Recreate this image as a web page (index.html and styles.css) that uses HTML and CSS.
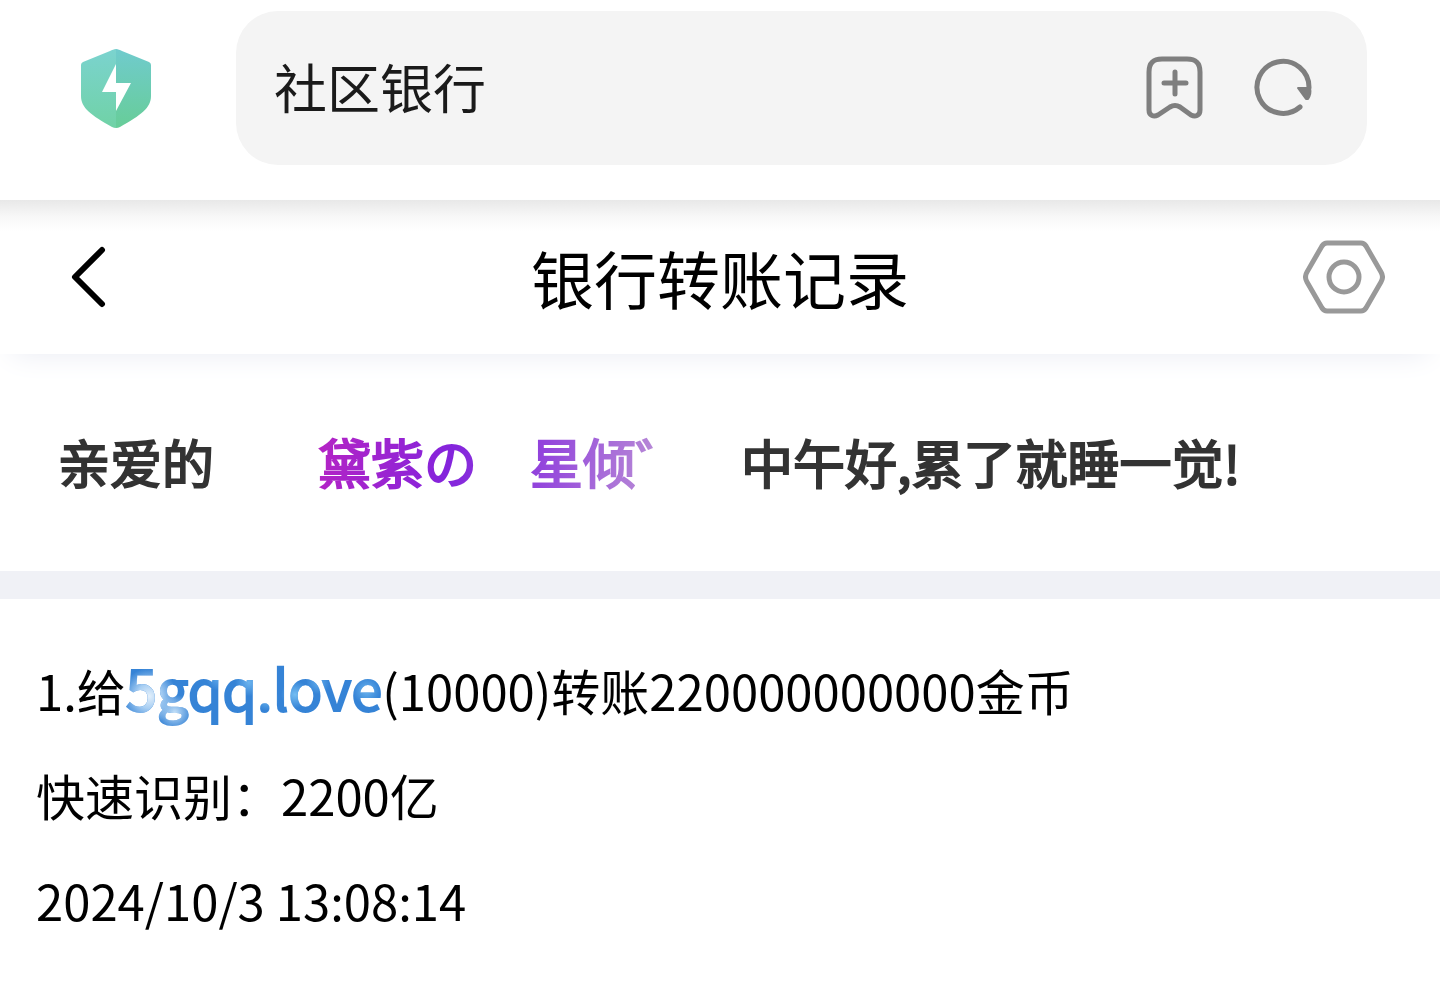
FILE: index.html
```html
<!DOCTYPE html>
<html lang="zh-CN">
<head>
  <meta charset="UTF-8" />
  <meta name="viewport" content="width=device-width, initial-scale=1.0"/>
  <title>社区银行</title>
  <link rel="stylesheet" href="styles.css">
</head>
<body>
  <header class="browser-bar">
    <svg class="shield" viewBox="0 0 72 80" aria-hidden="true">
      <defs>
        <linearGradient id="shieldLeft" x1="0" y1="0" x2="0" y2="1">
          <stop offset="0" stop-color="#7bd3cf"/>
          <stop offset="1" stop-color="#70d2a6"/>
        </linearGradient>
        <linearGradient id="shieldRight" x1="0" y1="0" x2="0" y2="1">
          <stop offset="0" stop-color="#70cbcd"/>
          <stop offset="1" stop-color="#67cd98"/>
        </linearGradient>
      </defs>
      <path fill="url(#shieldLeft)" d="M36 1C34 1 32 2 30 3L3 14Q1 15 1 17V48C1 60 11 67 32 79Q34 80 36 80Z"/>
      <path fill="url(#shieldRight)" d="M36 1C38 1 40 2 42 3L69 14Q71 15 71 17V48C71 60 61 67 40 79Q38 80 36 80Z"/>
      <path fill="#fff" d="M36 16V35H51L36 63V44H22Z"/>
    </svg>
    <form class="address">
      <input type="text" class="address-input" aria-label="地址" value="社区银行">
      <button type="button" class="icon-btn" aria-label="添加书签">
        <svg width="60" height="66" viewBox="0 0 60 66" fill="none" stroke="#7f7f7f" stroke-width="5" stroke-linecap="round" stroke-linejoin="round">
          <path d="M18 4H43C52 4 56 8 56 17V55C56 61 51 62 47 60L36 52Q31 49 26 52L14 60C10 62 5 61 5 55V17C5 8 9 4 18 4Z"/>
          <path d="M31 17V39M20 28H42"/>
        </svg>
      </button>
      <button type="button" class="icon-btn" aria-label="刷新">
        <svg width="60" height="60" viewBox="0 0 60 60" fill="none" stroke="#7f7f7f" stroke-width="5" stroke-linecap="round">
          <path d="M47 49A26 26 0 1 1 56 30"/>
          <path fill="#7f7f7f" stroke-width="2" stroke-linejoin="round" d="M45 30H57C58 34 57 38 55 41H53Z"/>
        </svg>
      </button>
    </form>
  </header>

  <nav class="title-bar">
    <a href="#" class="back" aria-label="返回">
      <svg width="36" height="62" viewBox="0 0 36 62" fill="none" stroke="#000" stroke-width="6" stroke-linecap="round" stroke-linejoin="round">
        <path d="M32 4L5 31L32 58"/>
      </svg>
    </a>
    <h1>银行转账记录</h1>
    <button type="button" class="settings" aria-label="设置">
      <svg width="82" height="74" viewBox="0 0 82 74" fill="none" stroke="#999" stroke-width="5" stroke-linejoin="round">
        <path d="M24 3H58Q61 3 63 6L78 32Q81 37 78 42L63 68Q61 71 58 71H24Q21 71 19 68L4 42Q1 37 4 32L19 6Q21 3 24 3Z"/>
        <circle cx="41" cy="37" r="15"/>
      </svg>
    </button>
  </nav>

  <main>
    <h2 class="greeting">亲爱的　　<span class="nickname">黛紫の　星倾゛</span>　中午好,累了就睡一觉!</h2>
    <section class="record">
      <p>1.给<a href="#" class="payee">5gqq.love</a>(10000)转账220000000000金币</p>
      <p>快速识别：2200亿</p>
      <p>2024/10/3 13:08:14</p>
    </section>
  </main>
</body>
</html>
```
FILE: styles.css
```css
* {
  box-sizing: border-box;
}

body {
  margin: 0;
  font-family: "Noto Sans CJK SC", sans-serif;
  background: #fff;
  color: #000;
}

button {
  border: none;
  padding: 0;
  background: none;
  cursor: pointer;
}

svg {
  display: block;
}

.browser-bar {
  display: flex;
  align-items: center;
  height: 200px;
  padding: 11px 73px 35px 80px;
}

.shield {
  width: 72px;
  height: 80px;
  flex: none;
}

.address {
  display: flex;
  align-items: center;
  flex: 1;
  gap: 49px;
  height: 154px;
  margin-left: 84px;
  padding: 0 54px 0 38px;
  border-radius: 42px;
  background: #f4f4f4;
}

.address-input {
  flex: 1;
  min-width: 0;
  padding: 0 0 5px;
  border: none;
  outline: none;
  background: none;
  font-family: inherit;
  font-size: 53px;
  color: #1a1a1a;
}

.title-bar {
  display: grid;
  grid-template-columns: 82px 1fr 82px;
  align-items: center;
  height: 154px;
  padding: 0 55px;
  background: linear-gradient(#e8e8e8, #f7f7f7 16px, #fff 32px);
  box-shadow: 0 12px 28px -12px #e9ebf3;
}

.back {
  padding-left: 15px;
}

h1 {
  margin: 0;
  padding-bottom: 2px;
  text-align: center;
  font-size: 63px;
  font-weight: 400;
}

.greeting {
  margin: 0;
  padding: 70px 58px 71px;
  border-bottom: 28px solid #f0f1f6;
  font-size: 52px;
  font-weight: 400;
  line-height: 76px;
  color: #333;
  -webkit-text-stroke: 2px;
}

.nickname {
  font-size: 53px;
  line-height: 1;
  background: linear-gradient(100deg, #b624c4, #8424dc 36%, #9345dc 60%, #b88bd6 90%);
  -webkit-background-clip: text;
  background-clip: text;
  color: transparent;
}

.record {
  padding: 38px 36px;
  font-size: 49px;
  line-height: 105px;
}

.record p {
  margin: 0;
}

.payee {
  font-size: 56px;
  line-height: 1;
  text-decoration: none;
  color: transparent;
  -webkit-text-stroke: 2px;
  background:
    radial-gradient(circle at 9% 62%, #e4f0fb, #a9cff3 12px, transparent 28px),
    radial-gradient(circle at 19% 82%, #c4e0f8, transparent 18px),
    radial-gradient(circle at 36% 40%, #5fa8ea, transparent 12px),
    radial-gradient(circle at 48% 45%, #6cb4ee, transparent 14px),
    radial-gradient(circle at 55% 65%, #6cb7f0, transparent 12px),
    radial-gradient(circle at 66% 60%, #74bdf2, transparent 14px),
    radial-gradient(circle at 75% 45%, #5faaea, transparent 12px),
    radial-gradient(circle at 94% 55%, #6ab3ee, transparent 14px),
    #3583d6;
  -webkit-background-clip: text;
  background-clip: text;
}
```
